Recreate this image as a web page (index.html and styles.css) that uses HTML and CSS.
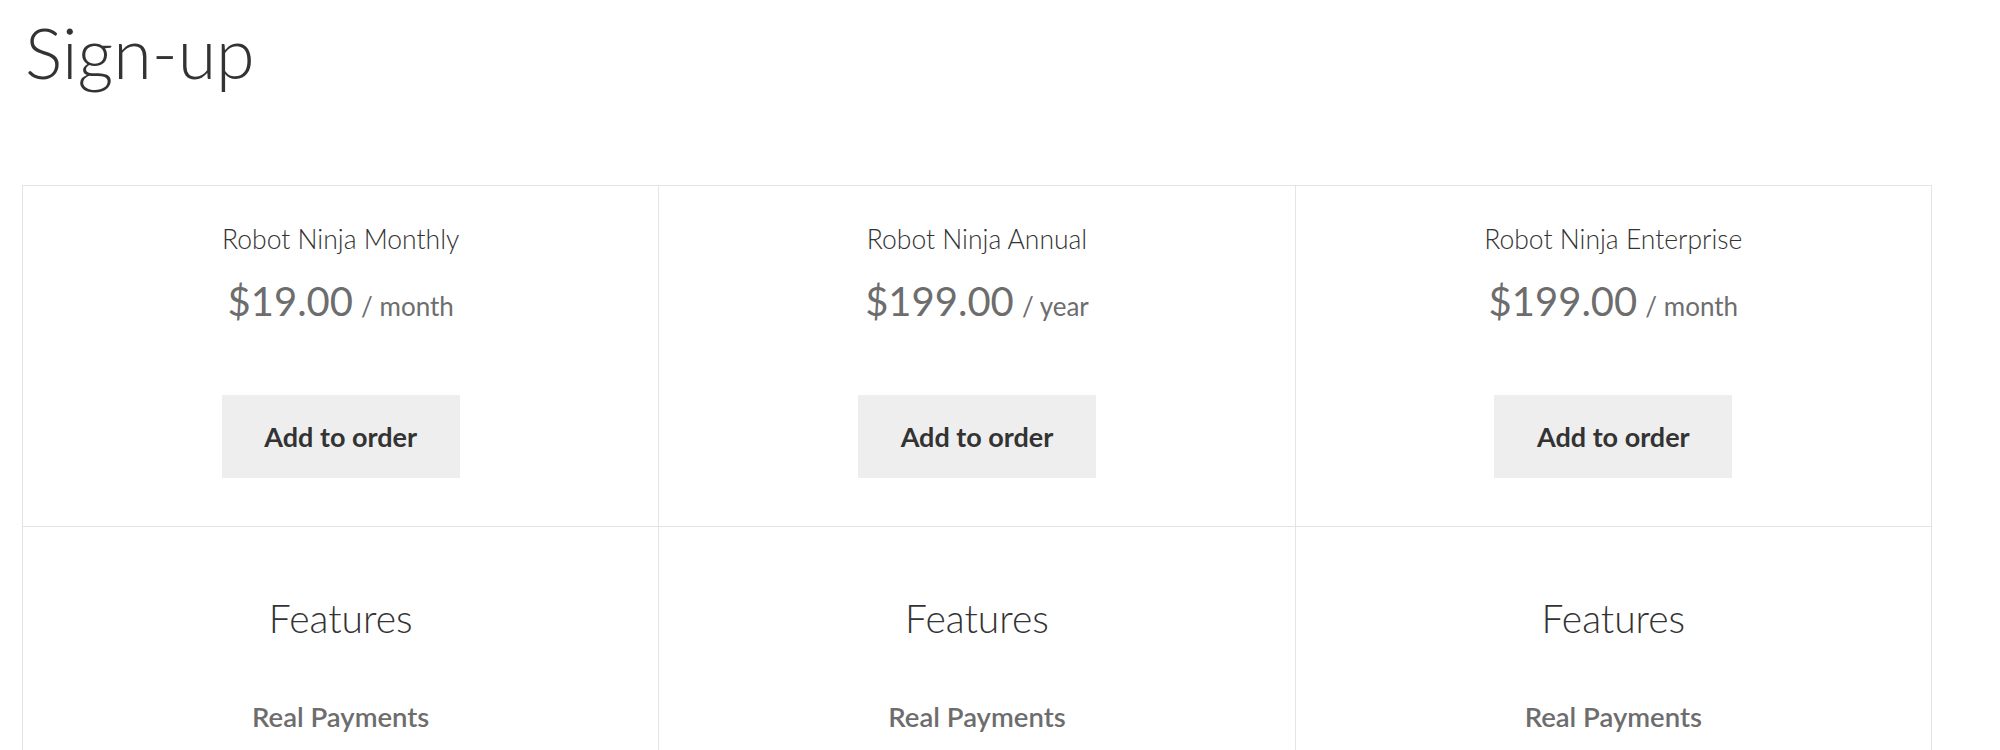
FILE: index.html
```html
<!DOCTYPE html>
<html lang="en">
<head>
<meta charset="utf-8">
<title>Sign-up</title>
<link rel="stylesheet" href="styles.css">
</head>
<body>
<main class="page">
  <h1 class="page-title">Sign-up</h1>
  <section class="plans">
    <div class="cell plan">
      <h3 class="plan-name">Robot Ninja Monthly</h3>
      <p class="price"><span class="amount">$19.00</span> <span class="period">/ month</span></p>
      <a class="btn" href="#">Add to order</a>
    </div>
    <div class="cell plan">
      <h3 class="plan-name">Robot Ninja Annual</h3>
      <p class="price"><span class="amount">$199.00</span> <span class="period">/ year</span></p>
      <a class="btn" href="#">Add to order</a>
    </div>
    <div class="cell plan">
      <h3 class="plan-name">Robot Ninja Enterprise</h3>
      <p class="price"><span class="amount">$199.00</span> <span class="period">/ month</span></p>
      <a class="btn" href="#">Add to order</a>
    </div>
    <div class="cell features">
      <h2 class="features-title">Features</h2>
      <p class="feature">Real Payments</p>
    </div>
    <div class="cell features">
      <h2 class="features-title">Features</h2>
      <p class="feature">Real Payments</p>
    </div>
    <div class="cell features">
      <h2 class="features-title">Features</h2>
      <p class="feature">Real Payments</p>
    </div>
  </section>
</main>
</body>
</html>
```

FILE: styles.css
```css
html, body {
  margin: 0;
  padding: 0;
  background: #ffffff;
}

body {
  font-family: Lato, "Open Sans", "Liberation Sans", sans-serif;
  color: #333333;
}

.page {
  padding: 0 68px 0 22px;
}

.page-title {
  margin: 0;
  padding: 10px 0 0 3px;
  font-size: 70px;
  font-weight: 300;
  line-height: 84px;
  color: #333333;
}

.plans {
  margin-top: 91px;
  display: grid;
  grid-template-columns: repeat(3, 1fr);
  border-top: 1px solid #e4e4e4;
  border-left: 1px solid #e4e4e4;
}

.cell {
  border-right: 1px solid #e4e4e4;
  border-bottom: 1px solid #e4e4e4;
  display: flex;
  flex-direction: column;
  align-items: center;
  text-align: center;
}

.plan {
  height: 341px;
  box-sizing: border-box;
  padding-top: 37px;
}

.plan-name {
  margin: 0;
  font-size: 26.5px;
  font-weight: 300;
  line-height: 32px;
  color: #333333;
}

.price {
  margin: 24px 0 0;
  color: #6d6d6d;
  line-height: 44px;
}

.amount {
  font-size: 40px;
  font-weight: 400;
}

.period {
  margin-left: 4px;
  font-size: 26px;
  font-weight: 400;
}

.btn {
  margin-top: 63px;
  width: 238px;
  height: 83px;
  box-sizing: border-box;
  background: #eeeeee;
  color: #333333;
  font-size: 27px;
  font-weight: 700;
  text-decoration: none;
  display: flex;
  align-items: center;
  justify-content: center;
}

.features {
  height: 260px;
  box-sizing: border-box;
  padding-top: 67px;
}

.features-title {
  margin: 0;
  font-size: 39px;
  font-weight: 300;
  line-height: 48px;
  color: #333333;
}

.feature {
  margin: 58px 0 0;
  font-size: 27.5px;
  font-weight: 600;
  line-height: 34px;
  color: #6d6d6d;
}
```
